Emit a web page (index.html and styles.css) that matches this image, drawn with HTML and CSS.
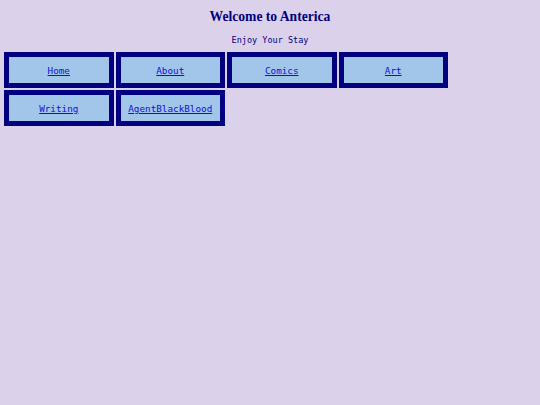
FILE: index.html
```html
<!DOCTYPE html>
<html>
<head>
<meta charset="utf-8">
<title>Anterica</title>
<link rel="stylesheet" href="styles.css">
</head>
<body>
<header class="header">
  <h1 class="title">Welcome to Anterica</h1>
  <p class="tagline">Enjoy Your Stay</p>
</header>
<nav class="nav">
  <div class="tile"><a href="#">Home</a></div>
  <div class="tile"><a href="#">About</a></div>
  <div class="tile"><a href="#">Comics</a></div>
  <div class="tile"><a href="#">Art</a></div>
  <div class="tile"><a href="#">Writing</a></div>
  <div class="tile"><a href="#">AgentBlackBlood</a></div>
</nav>
</body>
</html>
```
FILE: styles.css
```css
html, body {
  margin: 0;
  padding: 0;
  background: #dcd1ea;
}
body {
  padding: 7px 4px 0 4px;
  font-family: "DejaVu Sans Mono", monospace;
}
.header {
  text-align: center;
  color: #000080;
}
.title {
  margin: 0;
  font-family: "Liberation Serif", serif;
  font-weight: bold;
  font-size: 13.6px;
  line-height: 20px;
}
.tagline {
  margin: 7px 0 0 0;
  font-size: 8.5px;
  line-height: 12px;
}
.nav {
  margin-top: 6px;
  display: flex;
  flex-wrap: wrap;
  width: 448px;
  gap: 2px 2px;
}
.tile {
  box-sizing: border-box;
  width: 109.5px;
  height: 36px;
  border: 5px solid #000080;
  background: #a2c5ea;
  display: flex;
  align-items: center;
  justify-content: center;
  font-size: 9.3px;
}
.tile a {
  color: #0f0fd8;
}
```
